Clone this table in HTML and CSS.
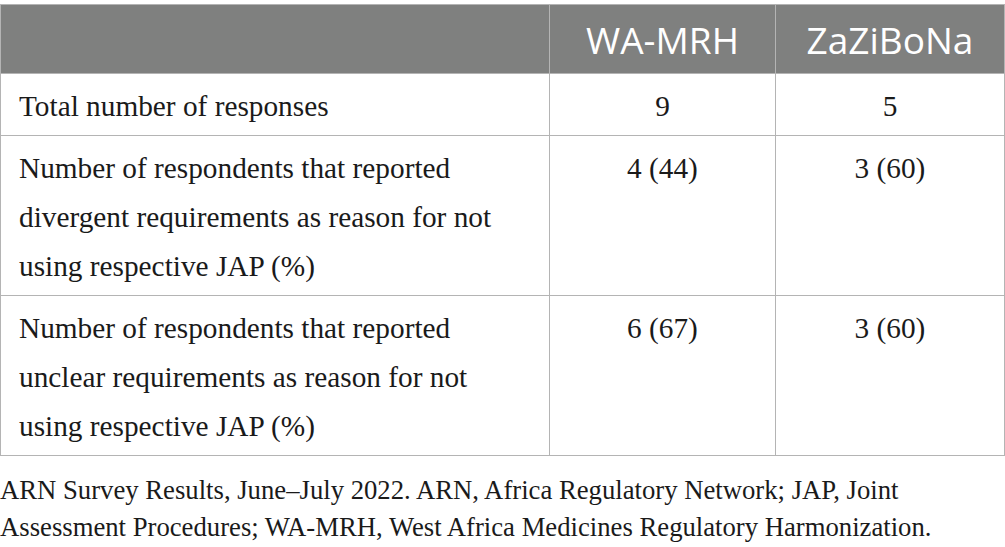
FILE: index.html
```html
<!DOCTYPE html>
<html>
<head>
<meta charset="utf-8">
<link rel="stylesheet" href="styles.css">
</head>
<body>
<div class="wrap">
<table class="data">
  <colgroup>
    <col class="c1"><col class="c2"><col class="c3">
  </colgroup>
  <thead>
    <tr><th></th><th>WA-MRH</th><th>ZaZiBoNa</th></tr>
  </thead>
  <tbody>
    <tr><td>Total number of responses</td><td class="num">9</td><td class="num">5</td></tr>
    <tr><td>Number of respondents that reported divergent requirements as reason for not using respective JAP (%)</td><td class="num">4 (44)</td><td class="num">3 (60)</td></tr>
    <tr><td>Number of respondents that reported unclear requirements as reason for not using respective JAP (%)</td><td class="num">6 (67)</td><td class="num">3 (60)</td></tr>
  </tbody>
</table>
<p class="caption">ARN Survey Results, June–July 2022. ARN, Africa Regulatory Network; JAP, Joint Assessment Procedures; WA-MRH, West Africa Medicines Regulatory Harmonization.</p>
</div>
</body>
</html>
```
FILE: styles.css
```css
html, body {
  margin: 0;
  padding: 0;
  background: #ffffff;
}
.wrap {
  padding-top: 4px;
  width: 1005px;
}
.data {
  border-collapse: collapse;
  width: 1004px;
  table-layout: fixed;
  font-family: "Liberation Serif", "Times New Roman", serif;
  font-size: 29.3px;
  color: #1a1a1a;
}
.c1 { width: 549px; }
.c2 { width: 226px; }
.c3 { width: 229px; }
.data th {
  background: #7f807f;
  color: #ffffff;
  font-family: "Open Sans", "Liberation Sans", sans-serif;
  font-weight: 400;
  font-size: 37px;
  height: 68px;
  padding: 0;
  border: 1px solid #b4b4b4;
  text-align: center;
  vertical-align: middle;
  line-height: 1;
}
.data td {
  border: 1px solid #b4b4b4;
  padding: 8px 32px 4px 18px;
  line-height: 49px;
  vertical-align: top;
  text-align: left;
}
.data td.num {
  text-align: center;
  padding-left: 4px;
  padding-right: 4px;
}
.caption {
  margin: 16px 0 0 0;
  font-family: "Liberation Serif", "Times New Roman", serif;
  font-size: 26.7px;
  line-height: 37px;
  color: #1a1a1a;
  width: 960px;
}
```
